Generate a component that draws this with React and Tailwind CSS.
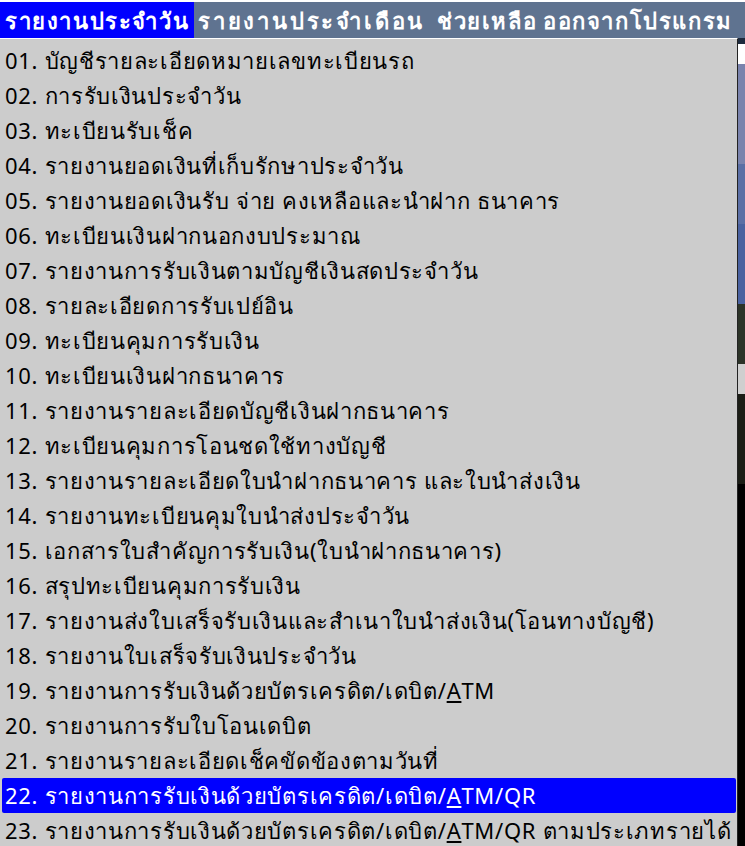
import React from 'react';

const items = [
  '01. บัญชีรายละเอียดหมายเลขทะเบียนรถ',
  '02. การรับเงินประจำวัน',
  '03. ทะเบียนรับเช็ค',
  '04. รายงานยอดเงินที่เก็บรักษาประจำวัน',
  '05. รายงานยอดเงินรับ จ่าย คงเหลือและนำฝาก ธนาคาร',
  '06. ทะเบียนเงินฝากนอกงบประมาณ',
  '07. รายงานการรับเงินตามบัญชีเงินสดประจำวัน',
  '08. รายละเอียดการรับเปย์อิน',
  '09. ทะเบียนคุมการรับเงิน',
  '10. ทะเบียนเงินฝากธนาคาร',
  '11. รายงานรายละเอียดบัญชีเงินฝากธนาคาร',
  '12. ทะเบียนคุมการโอนชดใช้ทางบัญชี',
  '13. รายงานรายละเอียดใบนำฝากธนาคาร และใบนำส่งเงิน',
  '14. รายงานทะเบียนคุมใบนำส่งประจำวัน',
  '15. เอกสารใบสำคัญการรับเงิน(ใบนำฝากธนาคาร)',
  '16. สรุปทะเบียนคุมการรับเงิน',
  '17. รายงานส่งใบเสร็จรับเงินและสำเนาใบนำส่งเงิน(โอนทางบัญชี)',
  '18. รายงานใบเสร็จรับเงินประจำวัน',
  '19. รายงานการรับเงินด้วยบัตรเครดิต/เดบิต/ATM',
  '20. รายงานการรับใบโอนเดบิต',
  '21. รายงานรายละเอียดเช็คขัดข้องตามวันที่',
  '22. รายงานการรับเงินด้วยบัตรเครดิต/เดบิต/ATM/QR',
  '23. รายงานการรับเงินด้วยบัตรเครดิต/เดบิต/ATM/QR ตามประเภทรายได้',
];

// แสดงตัว A ขีดเส้นใต้ (ปุ่มลัด) ใน ATM
const renderLabel = (text) => {
  const i = text.indexOf('ATM');
  if (i === -1) return text;
  return (
    <>
      {text.slice(0, i)}
      <span className="underline underline-offset-2">A</span>
      {text.slice(i + 1)}
    </>
  );
};

const App = () => {
  const selected = 21;

  return (
    <div
      className="w-[745px] h-[846px] overflow-hidden bg-white flex flex-col"
      style={{ fontFamily: '"Noto Sans", "DejaVu Sans", sans-serif' }}
    >
      {/* แถบเมนูด้านบน */}
      <div className="mt-[2px] h-[36px] bg-[#5f7390] flex items-stretch text-white font-bold text-[22px] tracking-[1.6px] leading-none shrink-0 whitespace-nowrap">
        <div className="w-[194px] shrink-0 bg-[#0000ff] pl-[5px] flex items-center">รายงานประจำวัน</div>
        <div className="w-[236px] shrink-0 pl-[4px] tracking-[2.8px] flex items-center">รายงานประจำเดือน</div>
        <div className="w-[108px] shrink-0 pl-[7px] flex items-center">ช่วยเหลือ</div>
        <div className="flex-1 pl-[5px] flex items-center">ออกจากโปรแกรม</div>
      </div>

      <div className="flex flex-1 min-h-0">
        {/* เมนูย่อย */}
        <div className="w-[738px] shrink-0 bg-[#cccccc] border-t border-t-white border-r border-r-[#222] pt-[4px] pl-[2px] pr-[1px] flex flex-col">
          {items.map((label, idx) => (
            <div
              key={label}
              className={
                'h-[35px] shrink-0 flex items-center pl-[3px] text-[22px] tracking-[0.7px] whitespace-nowrap rounded-[2px] ' +
                (idx === selected ? 'bg-[#0000ff] text-white' : 'text-black')
              }
            >
              {renderLabel(label)}
            </div>
          ))}
        </div>

        {/* หน้าต่างด้านหลัง */}
        <div className="flex-1 flex flex-col">
          <div className="h-[6px] bg-[#1e2b3e]" />
          <div className="h-[20px] bg-white" />
          <div className="h-[100px] bg-[#7a83ad]" />
          <div className="h-[60px] bg-[#5b6fa5]" />
          <div className="h-[80px] bg-[#4a62a0]" />
          <div className="h-[60px] bg-[#2c3328]" />
          <div className="h-[30px] bg-[#cfcfcf]" />
          <div className="h-[90px] bg-[#1b1d16]" />
          <div className="flex-1 bg-black" />
        </div>
      </div>
    </div>
  );
};

export default App;
